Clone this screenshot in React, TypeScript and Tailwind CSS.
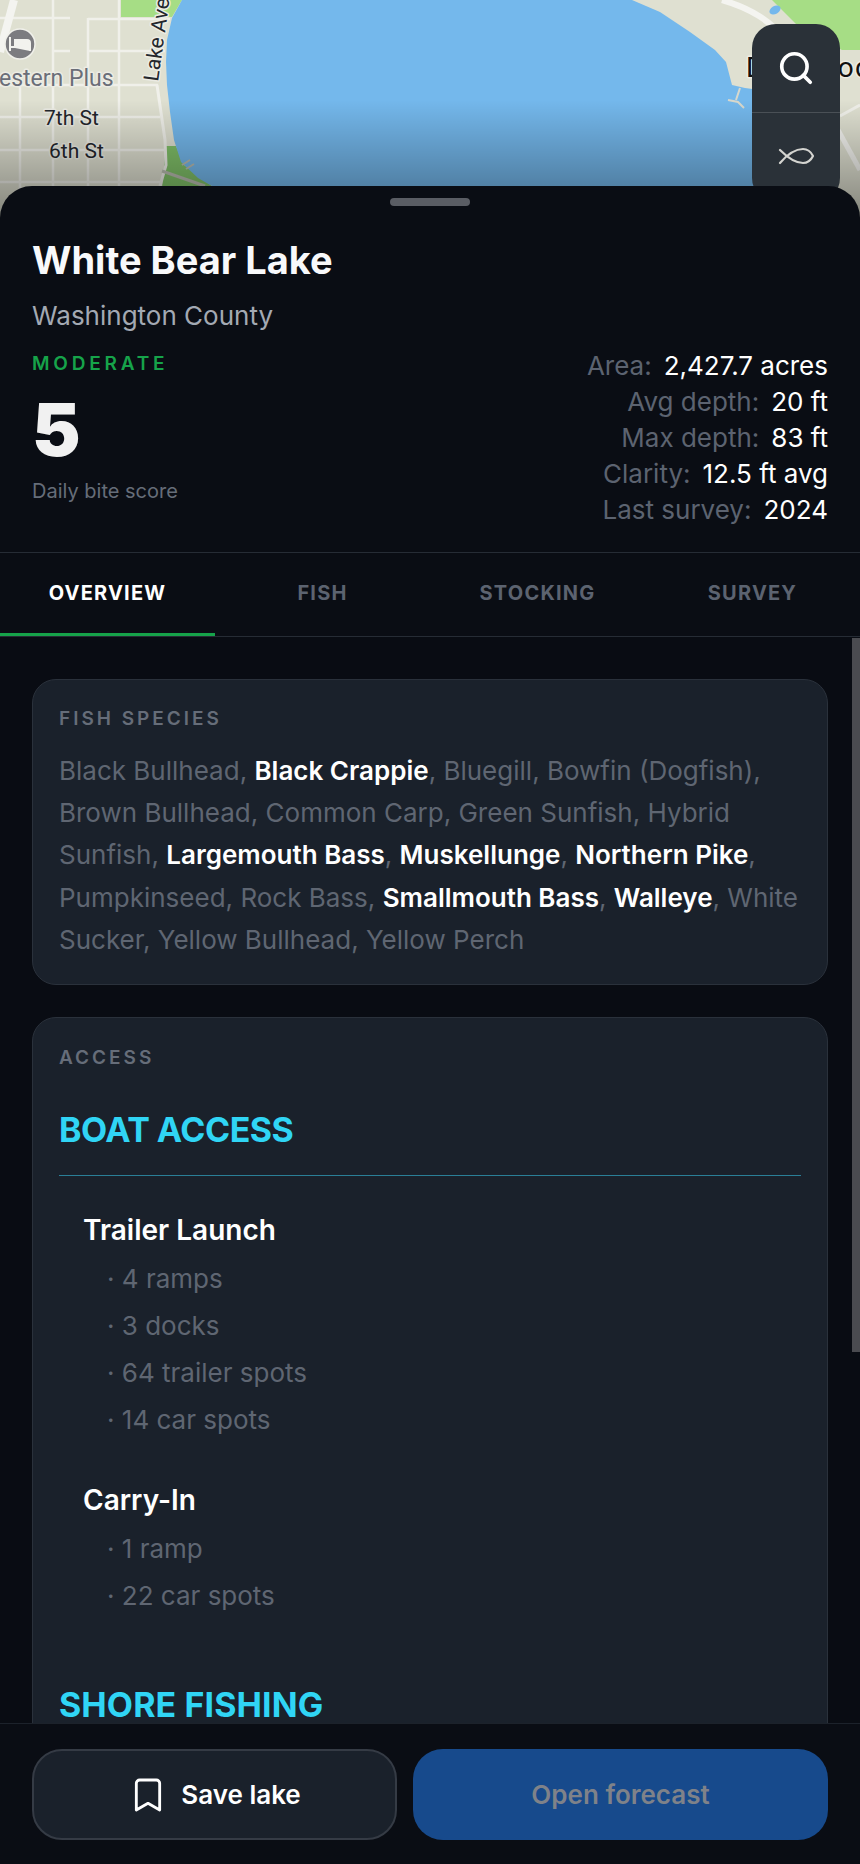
import { Bookmark, Search } from 'lucide-react'

const stats = [
  { label: 'Area:', value: '2,427.7 acres' },
  { label: 'Avg depth:', value: '20 ft' },
  { label: 'Max depth:', value: '83 ft' },
  { label: 'Clarity:', value: '12.5 ft avg' },
  { label: 'Last survey:', value: '2024' },
]

const tabs = ['OVERVIEW', 'FISH', 'STOCKING', 'SURVEY']

const species: Array<[string, boolean]> = [
  ['Black Bullhead', false],
  ['Black Crappie', true],
  ['Bluegill', false],
  ['Bowfin (Dogfish)', false],
  ['Brown Bullhead', false],
  ['Common Carp', false],
  ['Green Sunfish', false],
  ['Hybrid Sunfish', false],
  ['Largemouth Bass', true],
  ['Muskellunge', true],
  ['Northern Pike', true],
  ['Pumpkinseed', false],
  ['Rock Bass', false],
  ['Smallmouth Bass', true],
  ['Walleye', true],
  ['White Sucker', false],
  ['Yellow Bullhead', false],
  ['Yellow Perch', false],
]

// the map runs on under the sheet so it shows behind the rounded corners
function MapBackdrop() {
  const roads = 'M53 0V230 M88 18V230 M119 0V230 M20 85V230 M0 18H70 M88 19H170 M53 51H70 M88 51H165 M0 85H158 M0 117H160 M0 150H165 M0 182H160'
  return (
    <svg className="absolute left-0 top-0" width="860" height="230" viewBox="0 0 860 230">
      <rect width="860" height="230" fill="#dfe0d1" />
      <path d="M121 0H182L172 17H121Z" fill="#a6dd85" />
      <path d="M772 0H860V50H842L800 28Z" fill="#a6dd85" />
      <path d="M166 146H176L184 165L212 186V230H158Z" fill="#80c068" />
      <path d="M182 0L172 18L167 40L166 62L167 85L170 112L174 140L181 162L198 178L212 186V230H760V90L745 88L732 85L726 62L715 50L690 32L660 12L632 0Z" fill="#74b8ec" />
      <path d={roads} stroke="#f0f0ea" strokeWidth="2.5" fill="none" />
      <path d="M157 85L165 140L166 165L160 186" stroke="#f0f0ea" strokeWidth="3" fill="none" />
      <path d="M162 171L205 186" stroke="#b9bcb0" strokeWidth="3" fill="none" />
      <path d="M14 0L0 52" stroke="#f4f4f0" strokeWidth="8" fill="none" />
      <path d="M722 0C750 8 770 20 790 44" stroke="#f4f4f0" strokeWidth="6" fill="none" />
      <path d="M838 130L860 170" stroke="#f4f4f0" strokeWidth="5" fill="none" />
      <path d="M840 116L860 105" stroke="#f0f0ea" strokeWidth="3" fill="none" />
      <path d="M740 88L736 100M728 100L738 102L744 108" stroke="#d8d8cc" strokeWidth="2" fill="none" />
      <path d="M182 165L190 160M186 169L194 164" stroke="#b9bcb0" strokeWidth="2" fill="none" />
      <ellipse cx="775" cy="10" rx="6" ry="4" fill="#74b8ec" transform="rotate(-30 775 10)" />
      <circle cx="20" cy="44" r="15" fill="#7c7c80" stroke="#f0f0ea" strokeWidth="1.5" />
      <path d="M10 51V37M10 47H30V51M30 47V43C30 41 29 40 27 40H15V47" stroke="#f2f2ee" strokeWidth="2" fill="#f2f2ee" />
      <g className="font-[Roboto,sans-serif]" style={{ paintOrder: 'stroke' }} stroke="#ecece4" strokeWidth="3" strokeLinejoin="round">
        <text x="-1" y="86" fontSize="23" fill="#6a6e78">estern Plus</text>
        <text x="44" y="125" fontSize="21" fill="#23262c">7th St</text>
        <text x="49" y="158" fontSize="21" fill="#23262c">6th St</text>
        <text x="158" y="82" fontSize="21" fill="#23262c" transform="rotate(-82 158 82)">Lake Ave</text>
        <text x="746" y="77" fontSize="28" letterSpacing="1.3" fill="#111">Dellwood</text>
      </g>
    </svg>
  )
}

export default function App() {
  return (
    <div className="relative flex h-[1864px] w-[860px] flex-col overflow-hidden bg-[#0a0d14] font-[Inter,sans-serif]">
      <MapBackdrop />
      <div className="absolute left-0 top-[100px] h-[130px] w-full bg-gradient-to-b from-transparent to-black/45" />

      <div className="absolute left-[752px] top-[24px] h-[178px] w-[88px] rounded-[24px] bg-[#2a3138]">
        <div className="flex h-[89px] items-center justify-center border-b border-[#4a5056]">
          <Search size={38} color="#ffffff" strokeWidth={2.3} />
        </div>
        <div className="flex h-[88px] items-center justify-center pb-[2px]">
          <svg width="36" height="18" viewBox="0 0 36 18" fill="none" stroke="#d4d4d0" strokeWidth="2.2" strokeLinecap="round">
            <path d="M2 16C8 9 16 2 25 2C30 2 33 5 35 9C33 13 30 16 25 16C16 16 8 9 2 3" />
          </svg>
        </div>
      </div>

      <div className="relative mt-[186px] flex min-h-0 flex-1 flex-col overflow-hidden rounded-t-[32px] bg-[#0a0d14]">
        <div className="flex justify-center pt-[12px]">
          <div className="h-[8px] w-[80px] rounded-full bg-[#5a5d64]" />
        </div>

        <div className="flex items-end justify-between px-[32px] pb-[24px]">
          <div className="pb-[23px]">
            <h1 className="mt-[34px] text-[38px] leading-[40px] font-bold text-[#f8f9fb]">White Bear Lake</h1>
            <p className="mt-[18px] text-[26px] leading-[36px] text-[#a3a9b3]">Washington County</p>
            <p className="mt-[18px] text-[19px] leading-[24px] font-semibold tracking-[3.8px] text-[#16a34a]">MODERATE</p>
            <p className="mt-[18px] text-[73px] leading-[72px] font-black text-[#f1f1f1]">5</p>
            <p className="mt-[11px] text-[20px] leading-[28px] text-[#666d79]">Daily bite score</p>
          </div>
          <div className="flex flex-col items-end">
            {stats.map((s) => (
              <div key={s.label} className="flex gap-[12px] text-[26px] leading-[36px]">
                <span className="text-[#5c6370]">{s.label}</span>
                <span className="text-white">{s.value}</span>
              </div>
            ))}
          </div>
        </div>

        <div className="grid grid-cols-4 border-y border-[#262c35]">
          {tabs.map((t, i) => (
            <div
              key={t}
              className={`flex h-[83px] items-center justify-center border-b-[3px] text-[20px] font-bold tracking-[1.2px] ${
                i === 0 ? 'border-[#16a34a] text-white' : 'border-transparent text-[#5c6370]'
              }`}
            >
              {t}
            </div>
          ))}
        </div>

        <div className="relative min-h-0 flex-1 overflow-hidden bg-[#090c13] px-[32px] pt-[42px]">
          <div className="absolute right-0 top-[1px] h-[714px] w-[8px] bg-[#4a4b50]" />

          <section className="rounded-[24px] border border-[#2a313b] bg-[#1a212b] px-[26px] pt-[25px] pb-[23px]">
            <h2 className="text-[19px] leading-[28px] font-semibold tracking-[3px] text-[#666d79]">FISH SPECIES</h2>
            <p className="mt-[17px] text-[26px] leading-[42.2px] text-[#5f6672]">
              {species.map(([name, strong], i) => (
                <span key={name}>
                  {strong ? <strong className="font-semibold text-white">{name}</strong> : name}
                  {i < species.length - 1 ? ', ' : ''}
                </span>
              ))}
            </p>
          </section>

          <section className="mt-[32px] h-[900px] rounded-[24px] border border-[#2a313b] bg-[#1a212b] px-[26px] pt-[26px]">
            <h2 className="text-[19px] leading-[28px] font-semibold tracking-[3px] text-[#666d79]">ACCESS</h2>
            <h3 className="mt-[36px] border-b border-[#2a7f97] pb-[23px] text-[34px] leading-[44px] font-bold tracking-[-0.5px] text-[#30d5f5]">BOAT ACCESS</h3>
            <div className="pl-[24px]">
              <h4 className="mt-[32px] text-[28px] leading-[44px] font-semibold text-white">Trailer Launch</h4>
              <ul className="mt-[3px] pl-[24px] text-[26px] leading-[47px] text-[#5f6672]">
                <li>· 4 ramps</li>
                <li>· 3 docks</li>
                <li>· 64 trailer spots</li>
                <li>· 14 car spots</li>
              </ul>
              <h4 className="mt-[35px] text-[28px] leading-[44px] font-semibold text-white">Carry-In</h4>
              <ul className="mt-[3px] pl-[24px] text-[26px] leading-[47px] text-[#5f6672]">
                <li>· 1 ramp</li>
                <li>· 22 car spots</li>
              </ul>
            </div>
            <h3 className="mt-[64px] text-[34px] leading-[44px] font-bold tracking-[0.1px] text-[#30d5f5]">SHORE FISHING</h3>
          </section>
        </div>

        <div className="relative flex gap-[16px] border-t border-[#1c222b] bg-[#0a0d14] px-[32px] pt-[25px] pb-[24px]">
          <button className="flex h-[91px] w-[365px] items-center justify-center gap-[13px] rounded-[30px] border-2 border-[#353b45] bg-[#1a212b] text-[26px] font-semibold text-white">
            <Bookmark size={40} strokeWidth={1.7} />
            Save lake
          </button>
          <button className="flex h-[91px] flex-1 items-center justify-center rounded-[30px] bg-[#174a8c] text-[26px] font-semibold text-[#7f8289]">
            Open forecast
          </button>
        </div>
      </div>
    </div>
  )
}
